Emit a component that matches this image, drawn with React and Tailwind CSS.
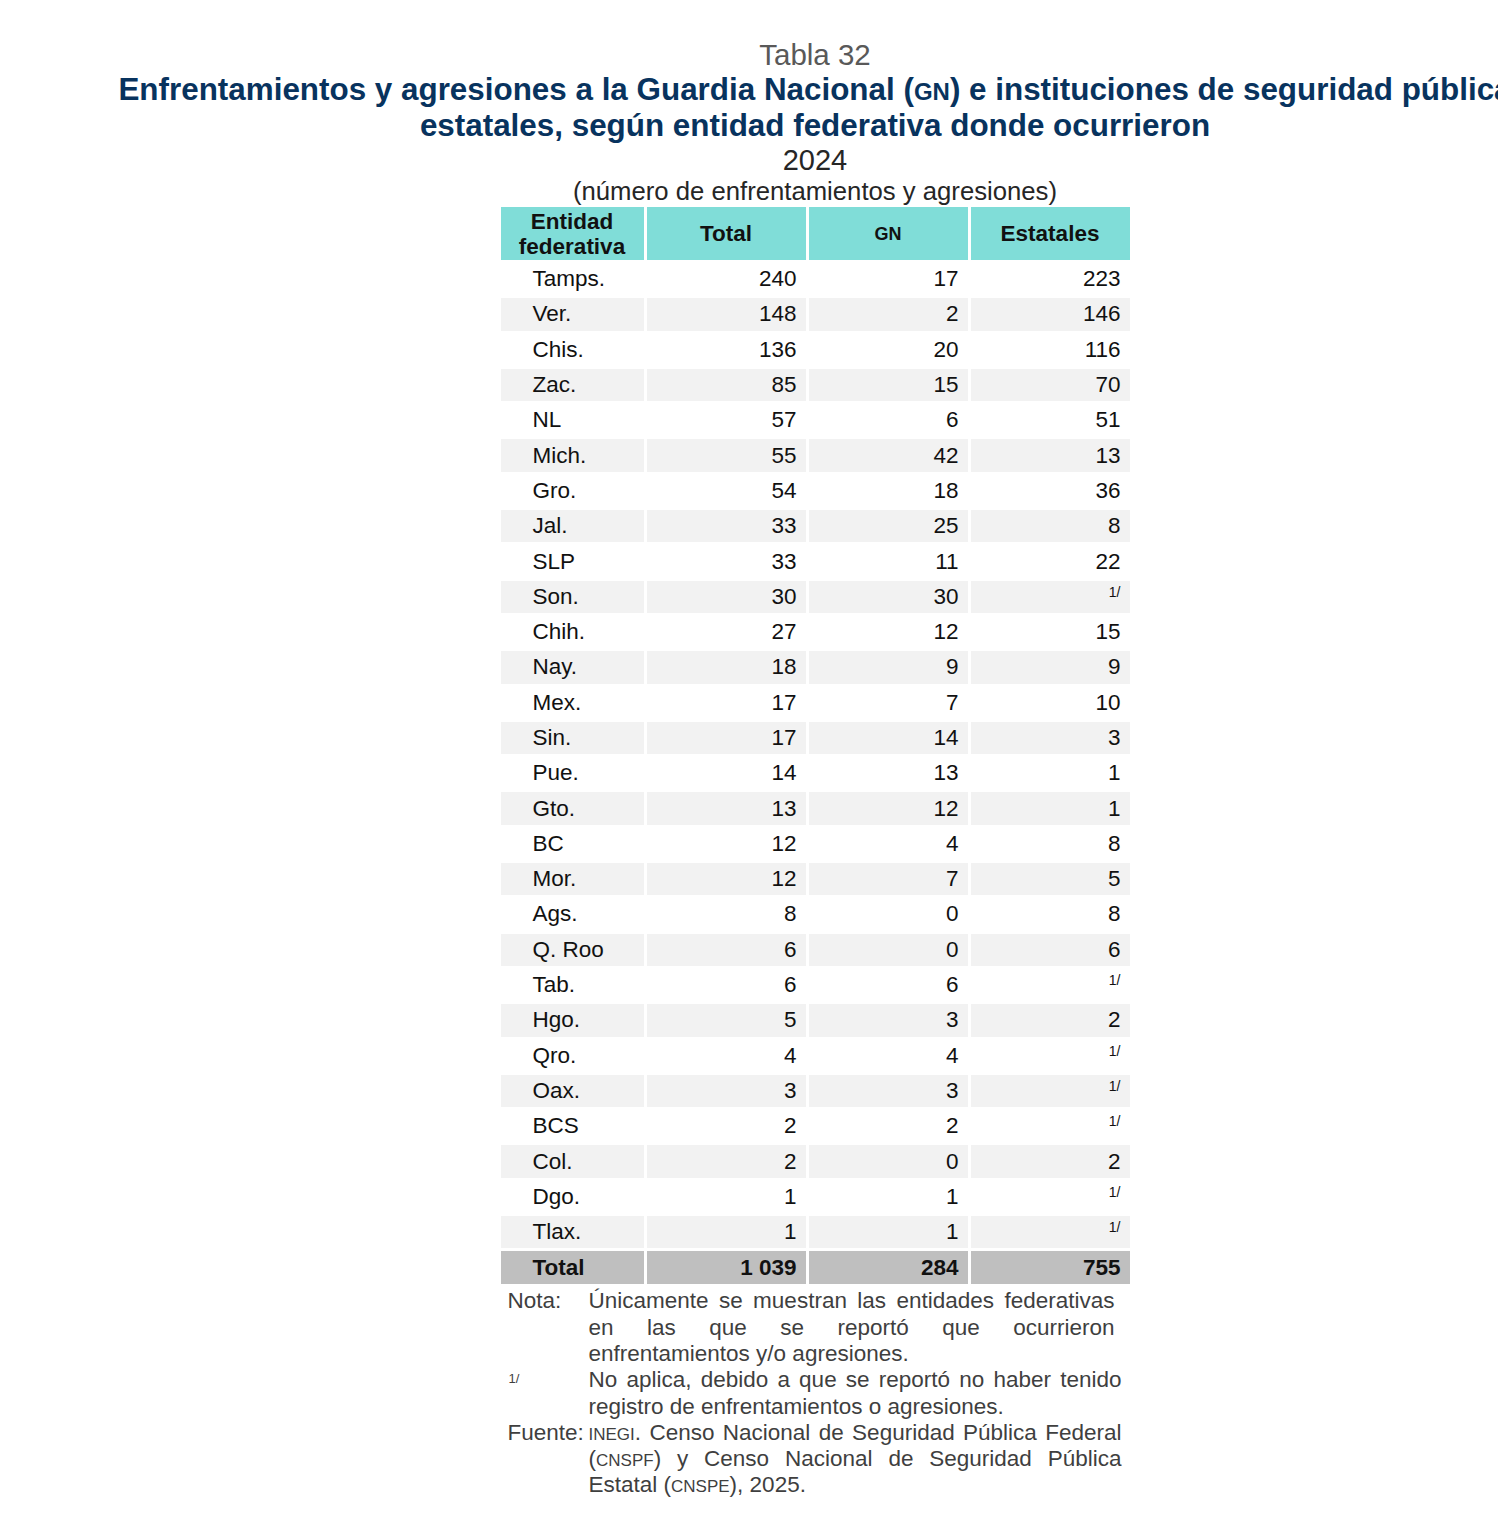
import React from "react";

const rows = [
  ["Tamps.", "240", "17", "223"],
  ["Ver.", "148", "2", "146"],
  ["Chis.", "136", "20", "116"],
  ["Zac.", "85", "15", "70"],
  ["NL", "57", "6", "51"],
  ["Mich.", "55", "42", "13"],
  ["Gro.", "54", "18", "36"],
  ["Jal.", "33", "25", "8"],
  ["SLP", "33", "11", "22"],
  ["Son.", "30", "30", null],
  ["Chih.", "27", "12", "15"],
  ["Nay.", "18", "9", "9"],
  ["Mex.", "17", "7", "10"],
  ["Sin.", "17", "14", "3"],
  ["Pue.", "14", "13", "1"],
  ["Gto.", "13", "12", "1"],
  ["BC", "12", "4", "8"],
  ["Mor.", "12", "7", "5"],
  ["Ags.", "8", "0", "8"],
  ["Q. Roo", "6", "0", "6"],
  ["Tab.", "6", "6", null],
  ["Hgo.", "5", "3", "2"],
  ["Qro.", "4", "4", null],
  ["Oax.", "3", "3", null],
  ["BCS", "2", "2", null],
  ["Col.", "2", "0", "2"],
  ["Dgo.", "1", "1", null],
  ["Tlax.", "1", "1", null],
];

function Row({ r, i }) {
  const bg = i % 2 === 1 ? "bg-[#f2f2f2]" : "bg-white";
  return (
    <>
      <div className={`${bg} h-[32.3px] flex items-center pl-[32px]`}>{r[0]}</div>
      <div className={`${bg} h-[32.3px] flex items-center justify-end pr-[9px]`}>{r[1]}</div>
      <div className={`${bg} h-[32.3px] flex items-center justify-end pr-[9px]`}>{r[2]}</div>
      {r[3] === null ? (
        <div className={`${bg} h-[32.3px] flex items-start justify-end pr-[9px] pt-[3px] text-[14px] leading-[16px]`}>1/</div>
      ) : (
        <div className={`${bg} h-[32.3px] flex items-center justify-end pr-[9px]`}>{r[3]}</div>
      )}
    </>
  );
}

const J = "text-justify [text-align-last:justify] whitespace-nowrap";

export default function App() {
  return (
    <div className="w-full overflow-hidden bg-white font-['Liberation_Sans',Arial,sans-serif]">
      <div className="w-[1630px] flex flex-col items-center pt-[39px] pb-[30px]">
        <div className="text-[29.5px] leading-[32px] text-[#595959]">Tabla 32</div>
        <div className="text-[31.4px] leading-[36px] font-bold text-[#08335e] text-center mt-[1px]">
          <div className="whitespace-nowrap">
            Enfrentamientos y agresiones a la Guardia Nacional (<span className="text-[24px] leading-none">GN</span>) e instituciones de seguridad pública
          </div>
          <div className="whitespace-nowrap">estatales, según entidad federativa donde ocurrieron</div>
        </div>
        <div className="text-[29px] leading-[32px] text-[#262626]">2024</div>
        <div className="text-[25.7px] leading-[30px] text-[#262626]">(número de enfrentamientos y agresiones)</div>

        <div className="mt-[1px] grid grid-cols-[143px_159px_159px_159px] gap-[3px] text-[22.5px] leading-[26px] text-[#111111]">
          <div className="bg-[#80ddd8] h-[53px] flex flex-col items-center justify-center font-bold leading-[25px]">
            <span>Entidad</span>
            <span>federativa</span>
          </div>
          <div className="bg-[#80ddd8] h-[53px] flex items-center justify-center font-bold">Total</div>
          <div className="bg-[#80ddd8] h-[53px] flex items-center justify-center font-bold text-[18px]">GN</div>
          <div className="bg-[#80ddd8] h-[53px] flex items-center justify-center font-bold">Estatales</div>
          {rows.map((r, i) => (
            <Row key={r[0]} r={r} i={i} />
          ))}
          <div className="bg-[#bfbfbf] h-[33px] flex items-center pl-[32px] font-bold">Total</div>
          <div className="bg-[#bfbfbf] h-[33px] flex items-center justify-end pr-[9px] font-bold">1 039</div>
          <div className="bg-[#bfbfbf] h-[33px] flex items-center justify-end pr-[9px] font-bold">284</div>
          <div className="bg-[#bfbfbf] h-[33px] flex items-center justify-end pr-[9px] font-bold">755</div>
        </div>

        <div className="mt-[4px] w-[629px] pl-[7px] grid grid-cols-[81px_533px] text-[22.5px] leading-[26.3px] text-[#3f3f3f]">
          <div>Nota:</div>
          <div className="w-[526px]">
            <div className={J}>Únicamente se muestran las entidades federativas</div>
            <div className={J}>en las que se reportó que ocurrieron</div>
            <div className="whitespace-nowrap">enfrentamientos y/o agresiones.</div>
          </div>
          <div className="text-[13px] leading-[20px] pl-[1px] pt-[2px]">1/</div>
          <div>
            <div className={J}>No aplica, debido a que se reportó no haber tenido</div>
            <div className="whitespace-nowrap">registro de enfrentamientos o agresiones.</div>
          </div>
          <div>Fuente:</div>
          <div>
            <div className={J}>
              <span className="text-[17px] leading-none">INEGI</span>. Censo Nacional de Seguridad Pública Federal
            </div>
            <div className={J}>
              (<span className="text-[17px] leading-none">CNSPF</span>) y Censo Nacional de Seguridad Pública
            </div>
            <div className="whitespace-nowrap">
              Estatal (<span className="text-[17px] leading-none">CNSPE</span>), 2025.
            </div>
          </div>
        </div>
      </div>
    </div>
  );
}
